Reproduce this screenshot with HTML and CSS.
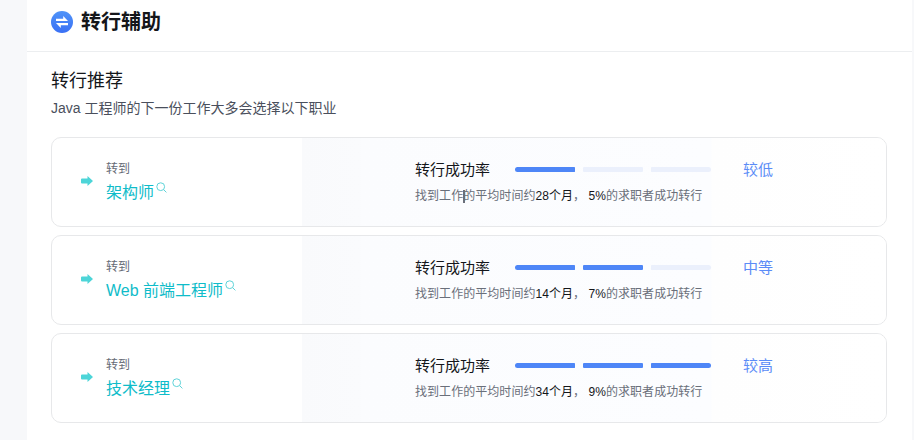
FILE: index.html
```html
<!DOCTYPE html>
<html lang="zh-CN">
<head>
<meta charset="utf-8">
<title>转行辅助</title>
<link rel="stylesheet" href="styles.css">
</head>
<body>
<main class="panel">
  <header class="head">
    <svg class="logo" width="22" height="22" viewBox="0 0 22 22"><defs><linearGradient id="lg" x1="0" y1="0" x2="0" y2="1"><stop offset="0" stop-color="#4f93f8"/><stop offset="1" stop-color="#3a70f5"/></linearGradient></defs><circle cx="11" cy="11" r="11" fill="url(#lg)"/><path d="M5 7.8H12.2V5L17 10.1H5ZM17 14.2H9.8V17L5 11.9H17Z" fill="#fff"/></svg>
    <h1 class="title">转行辅助</h1>
  </header>
  <section class="body">
    <h2 class="sub">转行推荐</h2>
    <p class="desc">Java 工程师的下一份工作大多会选择以下职业</p>
    <div class="list">
      <article class="card">
        <div class="left">
          <svg class="arrow" width="12" height="10" viewBox="0 0 12 10"><path d="M1 2.5H6.5V0L12 5L6.5 10V7.5H1Q0 7.5 0 6.5V3.5Q0 2.5 1 2.5Z" fill="#4dd5d8"/></svg>
          <div><div class="to">转到</div><div class="job">架构师<svg class="mag" width="11" height="11" viewBox="0 0 11 11"><circle cx="4.7" cy="4.7" r="3.9" fill="none" stroke="#5fd3d8"/><path d="M7.6 7.6L10.4 10.4" stroke="#5fd3d8"/></svg></div></div>
        </div>
        <div class="right">
          <div class="rate"><span class="rate-label">转行成功率</span><div class="bars"><i class="bar on"></i><i class="bar"></i><i class="bar"></i></div><span class="level">较低</span></div>
          <p class="info">找到工作的平均时间约<b>28个月</b>， <b>5%</b>的求职者成功转行</p>
          <i class="caret"></i>
        </div>
      </article>
      <article class="card">
        <div class="left">
          <svg class="arrow" width="12" height="10" viewBox="0 0 12 10"><path d="M1 2.5H6.5V0L12 5L6.5 10V7.5H1Q0 7.5 0 6.5V3.5Q0 2.5 1 2.5Z" fill="#4dd5d8"/></svg>
          <div><div class="to">转到</div><div class="job">Web 前端工程师<svg class="mag" width="11" height="11" viewBox="0 0 11 11"><circle cx="4.7" cy="4.7" r="3.9" fill="none" stroke="#5fd3d8"/><path d="M7.6 7.6L10.4 10.4" stroke="#5fd3d8"/></svg></div></div>
        </div>
        <div class="right">
          <div class="rate"><span class="rate-label">转行成功率</span><div class="bars"><i class="bar on"></i><i class="bar on"></i><i class="bar"></i></div><span class="level">中等</span></div>
          <p class="info">找到工作的平均时间约<b>14个月</b>， <b>7%</b>的求职者成功转行</p>
        </div>
      </article>
      <article class="card">
        <div class="left">
          <svg class="arrow" width="12" height="10" viewBox="0 0 12 10"><path d="M1 2.5H6.5V0L12 5L6.5 10V7.5H1Q0 7.5 0 6.5V3.5Q0 2.5 1 2.5Z" fill="#4dd5d8"/></svg>
          <div><div class="to">转到</div><div class="job">技术经理<svg class="mag" width="11" height="11" viewBox="0 0 11 11"><circle cx="4.7" cy="4.7" r="3.9" fill="none" stroke="#5fd3d8"/><path d="M7.6 7.6L10.4 10.4" stroke="#5fd3d8"/></svg></div></div>
        </div>
        <div class="right">
          <div class="rate"><span class="rate-label">转行成功率</span><div class="bars"><i class="bar on"></i><i class="bar on"></i><i class="bar on"></i></div><span class="level">较高</span></div>
          <p class="info">找到工作的平均时间约<b>34个月</b>， <b>9%</b>的求职者成功转行</p>
        </div>
      </article>
    </div>
  </section>
</main>
</body>
</html>
```

FILE: styles.css
```css
* { box-sizing: border-box; }
html, body { margin: 0; height: 100%; }
body {
  background: #f7f8fa;
  overflow: hidden;
  padding: 0 2px 0 27px;
  font-family: "Liberation Sans", "Noto Sans CJK SC", sans-serif;
}
.panel { background: #fff; height: 440px; }
.head {
  height: 52px;
  display: flex;
  align-items: flex-start;
  gap: 8px;
  padding: 11px 24px 0;
  border-bottom: 1px solid #eceef0;
}
.logo { flex: none; }
.title { margin: 0; font-size: 20px; line-height: 22px; font-weight: 700; color: #14161a; }
.body { padding: 17px 25px 0 24px; }
.sub { margin: 0; font-size: 18px; line-height: 24px; font-weight: 400; color: #14161a; }
.desc { margin: 5px 0 0; font-size: 14px; line-height: 20px; color: #4a4f5c; }
.list { display: flex; flex-direction: column; gap: 8px; margin-top: 19px; }
.card {
  height: 90px;
  border: 1px solid #e7e8ea;
  border-radius: 10px;
  display: flex;
  overflow: hidden;
}
.left {
  width: 250px;
  flex: none;
  display: flex;
  align-items: center;
  gap: 13px;
  padding: 0 0 0 29px;
}
.arrow { flex: none; margin-top: -2px; }
.to { font-size: 12px; line-height: 16px; color: #666b75; }
.job { margin-top: 5px; font-size: 16px; line-height: 22px; color: #0fbcc9; display: flex; align-items: flex-start; }
.mag { margin: 0 0 0 2px; }
.right {
  flex: 1;
  position: relative;
  padding: 19px 0 0 113px;
  background: linear-gradient(90deg, #f9fafc 0, #fafbfd 58px, #fbfcfe 59px, #fcfdff 409px, #fefefe 410px, #fff 100%);
}
.rate { display: flex; align-items: center; height: 22px; }
.rate-label { width: 100px; font-size: 15px; color: #14161a; }
.bars { display: flex; gap: 8px; width: 228px; margin-top: 3px; }
.bar { width: 60px; height: 5px; background: #ebf0fc; border-radius: 1px; }
.bar.on { background: #4e86f7; }
.bar:first-child { border-radius: 3px 1px 1px 3px; }
.bar:last-child { border-radius: 1px 3px 3px 1px; }
.level { font-size: 15px; color: #5b8cf7; }
.info { margin: 8px 0 0; font-size: 12px; line-height: 18px; color: #6a6f7a; letter-spacing: .05px; }
.info b { font-weight: 400; color: #14161a; }
.caret { position: absolute; left: 161px; top: 52px; width: 2px; height: 13px; background: #6a6f7a; }
```
